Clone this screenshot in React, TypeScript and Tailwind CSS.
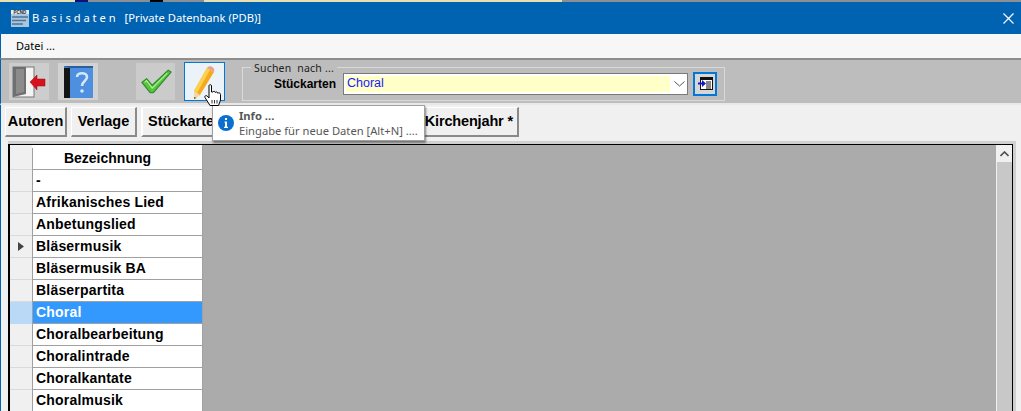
import React from 'react';

const rows = [
  '-',
  'Afrikanisches Lied',
  'Anbetungslied',
  'Bläsermusik',
  'Bläsermusik BA',
  'Bläserpartita',
  'Choral',
  'Choralbearbeitung',
  'Choralintrade',
  'Choralkantate',
  'Choralmusik',
];

const tabBtn = 'h-[30px] flex items-center justify-center bg-[#f0f0f0] border-t border-l border-t-white border-l-white border-r-2 border-b-2 border-r-[#8a8a8a] border-b-[#8a8a8a] text-[14.500px] font-bold text-black';

const ExitIcon = () => (
  <svg width="34" height="32" viewBox="0 0 34 32">
    <rect x="1" y="1" width="21" height="30" fill="#f4f4f4" stroke="#777" />
    <path d="M1 1 L14 1 L14 28 L1 31 Z" fill="#6f6f6f" />
    <path d="M4 3 L12 3 L12 26 L4 28 Z" fill="#8b8b8b" />
    <path d="M18 16 L25 9 L25 13 L33 13 L33 20 L25 20 L25 24 Z" fill="#d8121c" stroke="#8f0c12" strokeWidth="0.5" />
  </svg>
);

const HelpIcon = () => (
  <svg width="32" height="32" viewBox="0 0 32 32">
    <rect x="2" y="0" width="29" height="32" fill="#3f7fd0" />
    <rect x="8" y="2" width="23" height="30" fill="#4f8fe0" />
    <path d="M2 2 L8 2 L8 32 L2 32 Z" fill="#141414" />
    <path d="M2 0 L31 0 L31 2 L8 2 Z" fill="#2a5f9e" />
    <path d="M15 11 C15 6 25 6 25 11 C25 15 20 15 20 20" fill="none" stroke="#d6e6fb" strokeWidth="2.6" />
    <circle cx="20" cy="25" r="1.8" fill="#d6e6fb" />
  </svg>
);

const CheckIcon = () => (
  <svg width="32" height="27" viewBox="0 0 34 28">
    <path d="M2 15 L7 11 L13 18 L30 2 L33 4 L14 26 L11 26 Z" fill="#55c63a" stroke="#2c8a2a" strokeWidth="1.2" strokeLinejoin="round" />
    <path d="M5 15 L7 13 L13 21 L29 5" fill="none" stroke="#b5ee9f" strokeWidth="1.2" />
  </svg>
);

const PencilIcon = () => (
  <svg width="26" height="36" viewBox="0 0 26 36">
    <path d="M15 4 L22 8 L8 31 L2 35 L2 27 Z" fill="#f6a91e" />
    <path d="M15 4 L18 6 L5 29 L2 27 Z" fill="#fcd14b" />
    <path d="M15 4 C17 0 24 3 22 8 Z" fill="#e9a092" />
    <path d="M2 27 L8 31 L2 35 Z" fill="#f3d9a8" />
    <path d="M2 33 L4.500 34 L2 35 Z" fill="#7a4a18" />
  </svg>
);

const HandCursor = () => (
  <svg width="18" height="23" viewBox="0 0 18 23">
    <path d="M5 1.500 C5 .5 7.500 .5 7.500 1.500 L7.500 8 L9 8 C9.500 7 11 7 11.300 8.500 C12 7.500 13.500 7.800 13.700 9.200 C14.500 8.500 16.500 8.800 16.500 10.500 L16.500 16 L14.500 21.500 L6 21.500 L1 13.500 C.3 12 2 11 3.200 12 L5 14 Z" fill="#fff" stroke="#000" strokeWidth="1" strokeLinejoin="round" />
    <path d="M8 16 L8 19.500 M10.500 16 L10.500 19.500 M13 16 L13 19.500" stroke="#000" strokeWidth="0.8" />
  </svg>
);

const FindIcon = () => (
  <svg width="15" height="13" viewBox="0 0 15 13">
    <rect x="2.500" y="0.500" width="12" height="12" fill="#fff" stroke="#111" />
    <path d="M2.500 2 H14.500" stroke="#111" strokeWidth="2" />
    <path d="M8 5 H13 M8 7 H13 M8 9 H13 M8 11 H13" stroke="#111" />
    <path d="M0 5.500 H4 V3 L8 6.500 L4 10 V7.500 H0 Z" fill="#1616c8" />
  </svg>
);

const AppLogo = () => (
  <svg width="18" height="17" viewBox="0 0 18 17">
    <rect x="0" y="3" width="18" height="14" fill="#a9c6df" />
    <rect x="0" y="0" width="18" height="4" fill="#e9eef2" />
    <path d="M1 7 H17 M1 10.500 H15 M1 14 H12" stroke="#4e7697" strokeWidth="1.300" />
    <text x="9" y="3.500" textAnchor="middle" fontSize="4.500" fontWeight="bold" fill="#222" fontFamily="Liberation Sans">PCND</text>
  </svg>
);

export default function App() {
  return (
    <div className="relative w-[1021px] h-[411px] overflow-hidden flex flex-col bg-[#f0f0f0] font-['Liberation_Sans',Arial,sans-serif]">
      {/* what shows of the desktop above the window */}
      <div className="h-[2px] shrink-0 flex bg-[#8a8f96]">
        <div className="w-[75px] bg-[#eadfae]" />
        <div className="w-[13px] bg-[#10107a]" />
        <div className="w-[62px]" />
        <div className="w-[13px] bg-black" />
        <div className="w-[41px]" />
        <div className="w-[358px] bg-[#eadfae]" />
      </div>

      {/* title bar */}
      <div className="h-[32px] shrink-0 bg-[#0063b1] flex items-center pl-[11px] pr-[7px] text-white">
        <AppLogo />
        <span className="ml-[3px] text-[11.200px] tracking-[2.900px] font-['Noto_Sans',sans-serif] leading-none">Basisdaten</span>
        <span className="ml-[6px] text-[11.200px] font-['Noto_Sans',sans-serif] leading-none">[Private Datenbank (PDB)]</span>
        <svg className="ml-auto" width="11" height="11" viewBox="0 0 11 11">
          <path d="M.5 .5 L10.500 10.500 M10.500 .5 L.5 10.500" stroke="#fff" strokeWidth="1.200" />
        </svg>
      </div>

      {/* menu */}
      <div className="h-[24px] shrink-0 bg-[#f7f7f7] border-l border-[#0063b1] flex items-center pl-[15px] text-[11px] text-black font-['Noto_Sans',sans-serif]">
        Datei ...
      </div>

      {/* toolbar */}
      <div className="h-[47px] shrink-0 bg-[#bdbdbd] border-t-2 border-t-[#8e8e8e] border-b-2 border-b-[#e8e8e8] border-l border-l-[#0063b1] flex items-center pl-[8px]">
        <div className="w-[40px] h-[37px] bg-[#cdcdcd] flex items-center justify-center"><ExitIcon /></div>
        <div className="ml-[9px] w-[40px] h-[37px] bg-[#d2d2d2] flex items-center justify-center"><HelpIcon /></div>
        <div className="ml-[38px] w-[39px] h-[37px] bg-[#cbcbcb] flex items-center justify-center"><CheckIcon /></div>
        <div className="ml-[9px] w-[41px] h-[39px] bg-[#ebf3f9] border border-[#0078d7] flex items-center justify-center"><PencilIcon /></div>
        {/* search group */}
        <div className="relative ml-[17px] w-[483px] h-[34px] mt-[4px] border border-[#d9d9d9] flex items-center">
          <span className="absolute left-[8px] top-[-6px] bg-[#bdbdbd] px-[3px] text-[10.500px] leading-[13px] tracking-[0.2px] text-[#222] font-['Noto_Sans',sans-serif]">Suchen&nbsp; nach ...</span>
          <span className="w-[93px] text-right text-[12px] font-bold text-black pt-[1px]">Stückarten</span>
          <div className="ml-[7px] w-[345px] h-[22px] bg-white border border-[#7a7a7a] flex items-center p-[2px]">
            <div className="w-[324px] h-full bg-[#ffffc8] flex items-center pl-[1px] text-[12.500px] text-[#1a1aff]">Choral</div>
            <svg className="ml-[4px]" width="11" height="6" viewBox="0 0 11 6">
              <path d="M.5 .5 L5.500 5 L10.500 .5" fill="none" stroke="#555" />
            </svg>
          </div>
          <div className="ml-[5px] w-[24px] h-[24px] bg-[#d6d6d6] border-2 border-[#0078d7] flex items-center justify-center"><FindIcon /></div>
        </div>
      </div>

      {/* button strip */}
      <div className="h-[36px] shrink-0 bg-[#f0f0f0] border-l border-[#0063b1] flex items-start pl-[4px] pt-[2px] gap-[4px]">
        <div className={`${tabBtn} w-[62px]`}>Autoren</div>
        <div className={`${tabBtn} w-[66px]`}>Verlage</div>
        <div className={`${tabBtn} w-[100px] border-t-[#707070] border-l-2 border-l-[#707070] justify-start pl-[5px]`}>Stückarten</div>
        <div className={`${tabBtn} w-[170px]`} />
        <div className={`${tabBtn} w-[100px] justify-end pr-[4px] tracking-[-0.15px]`}>Kirchenjahr *</div>
      </div>

      {/* table */}
      <div className="flex-1 min-h-0 border-l border-[#0063b1] bg-[#f0f0f0] pl-[7px] pr-[5px]">
        <div className="h-full bg-[#d0d0d0] pt-[3px] pr-[3px]">
          <div className="h-full border-t-[1.500px] border-l-[2px] border-r-[1px] border-black flex bg-[#ababab] overflow-hidden">
            <div className="w-[22px] shrink-0 pt-[3px] bg-[#f0f0f0]">
              <div className="h-[22px] border-b border-[#dadada]" />
              {rows.map(name => (
                <div key={name} className={`h-[22px] border-b flex items-center justify-center ${name === 'Choral' ? 'bg-[#b9d9f7] border-[#b9d9f7]' : 'bg-[#f0f0f0] border-[#dadada]'}`}>
                  {name === 'Bläsermusik' && (
                    <svg width="6" height="9" viewBox="0 0 6 9"><path d="M0 0 L6 4.500 L0 9 Z" fill="#444" /></svg>
                  )}
                </div>
              ))}
            </div>
            <div className="w-[171px] shrink-0 border-r border-[#a0a0a0] bg-white pt-[3px]">
              <div className="h-[22px] bg-white border-l border-b border-[#a0a0a0] flex items-center justify-center pr-[20px] pb-[1px] text-[14px] font-bold text-black">Bezeichnung</div>
              {rows.map(name => (
                <div key={name} className={`h-[22px] border-l border-b border-[#a0a0a0] flex items-center pl-[3px] text-[14px] tracking-[0.2px] font-bold ${name === 'Choral' ? 'bg-[#3399ff] text-white' : 'bg-white text-black'}`}>{name}</div>
              ))}
            </div>
            <div className="flex-1" />
            <div className="w-[16px] shrink-0 bg-[#c8c8c8] border-l border-[#f0f0f0] flex flex-col">
              <div className="h-[17px] bg-[#f0f0f0] flex items-center justify-center">
                <svg width="9" height="6" viewBox="0 0 9 6"><path d="M.5 5 L4.500 1 L8.500 5" fill="none" stroke="#505050" strokeWidth="1.600" /></svg>
              </div>
            </div>
          </div>
        </div>
      </div>

      {/* tooltip */}
      <div className="absolute left-[212px] top-[105px] w-[213px] h-[36px] bg-white border border-[#a0a0a0] shadow-[1px_2px_2px_rgba(0,0,0,0.45)] flex items-center pl-[5px]">
        <div className="w-[16px] h-[16px] rounded-full bg-[#0b6fd0] text-white flex items-center justify-center">
          <svg width="4" height="10" viewBox="0 0 4 10"><path d="M1 0 H3 V2 H1 Z M0.500 3.500 H3 V8.800 H4 V10 H0 V8.800 H1 V4.700 H0.500 Z" fill="#fff" /></svg>
        </div>
        <div className="ml-[5px] -mt-[1px] font-['Noto_Sans',sans-serif] text-[#575757] text-[11.200px] leading-[15px]">
          <div className="font-bold">Info ...</div>
          <div className="whitespace-nowrap">Eingabe für neue Daten [Alt+N] ....</div>
        </div>
      </div>

      {/* mouse pointer */}
      <div className="absolute left-[204px] top-[84px]"><HandCursor /></div>
    </div>
  );
}
